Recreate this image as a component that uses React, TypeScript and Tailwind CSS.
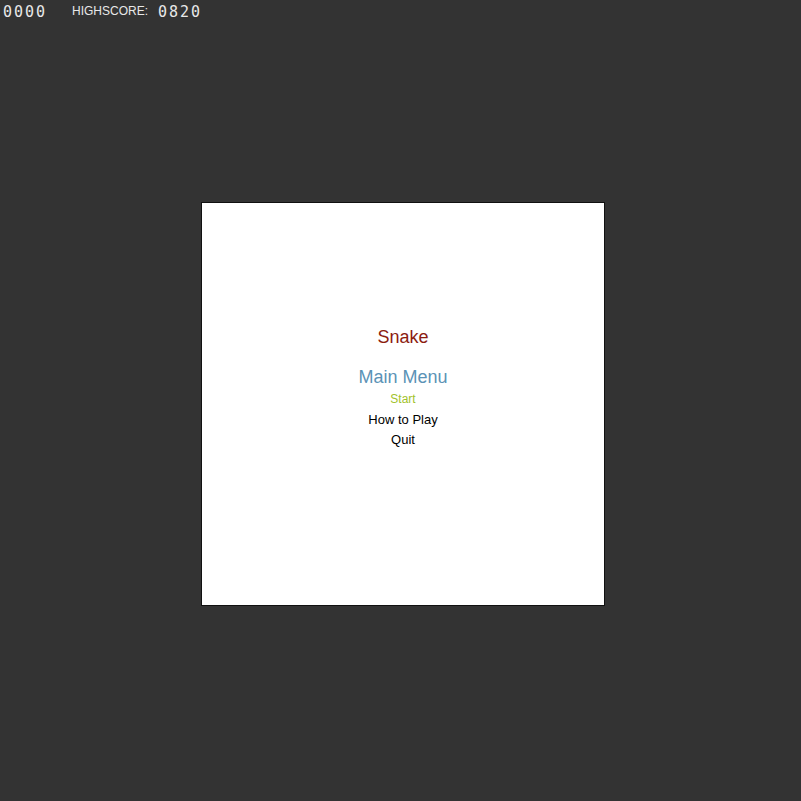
const App = () => {
  return (
    <div className="w-[801px] h-[801px] bg-[#333333] overflow-hidden font-['Liberation_Sans',Arial,sans-serif]">
      {/* Score bar */}
      <div className="flex items-center h-[21px] text-[#e8e8e8]">
        <span className="ml-[3px] mt-[2px] w-[44px] font-['DejaVu_Sans_Mono',monospace] text-[15px] leading-[16px] tracking-[2px]">0000</span>
        <span className="ml-[25px] text-[12px]">HIGHSCORE:</span>
        <span className="ml-[10px] mt-[2px] font-['DejaVu_Sans_Mono',monospace] text-[15px] leading-[16px] tracking-[2px]">0820</span>
      </div>

      {/* Game board */}
      <div className="ml-[201px] mt-[181px] w-[404px] h-[404px] bg-white border border-[#111111] flex flex-col items-center">
        <h1 className="mt-[121px] text-[18px] leading-[26px] text-[#8c1c10]">Snake</h1>
        <h2 className="mt-[14px] text-[18px] leading-[26px] text-[#5b93b6]">Main Menu</h2>
        <button className="mt-[-1px] text-[12px] leading-[20px] text-[#a2c22c]">Start</button>
        <button className="mt-[1px] text-[13px] leading-[20px] text-black">How to Play</button>
        <button className="text-[13px] leading-[20px] text-black">Quit</button>
      </div>
    </div>
  );
};

export default App;
